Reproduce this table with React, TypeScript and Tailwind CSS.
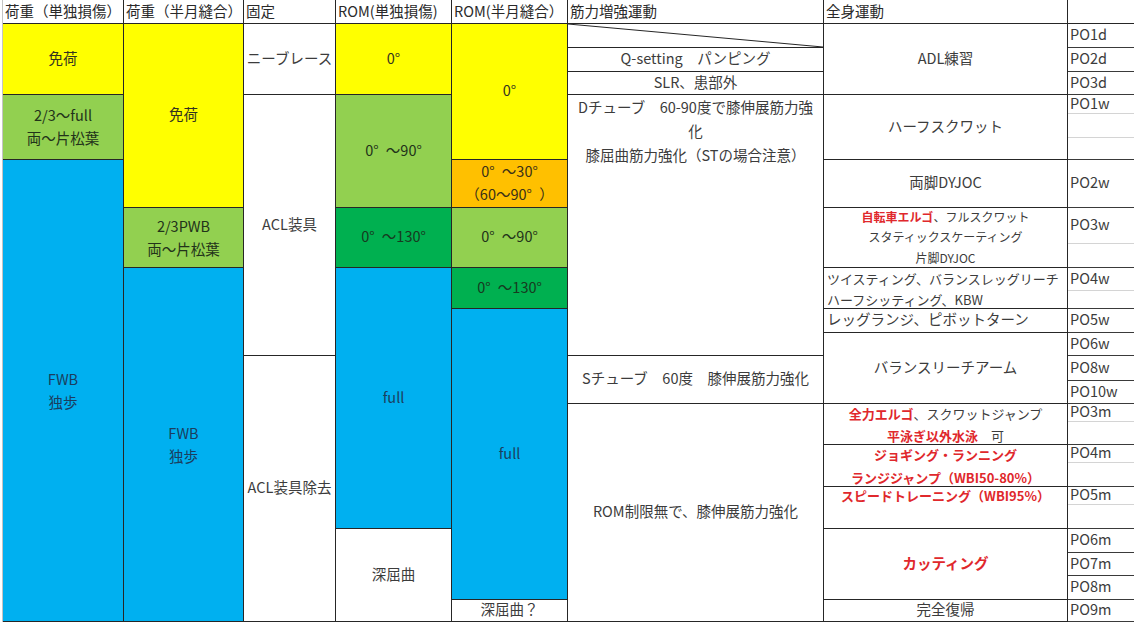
import React from 'react';

// 膝靭帯損傷のリハビリ進行表（Excel風）

const base = 'flex items-center justify-center text-center border-r border-b border-[#262626] whitespace-nowrap pb-[4px]';
const yellow = 'bg-[#ffff00] text-[#333320]';
const lime = 'bg-[#92d050] text-[#22331a]';
const green = 'bg-[#00b050] text-[#173a20]';
const orange = 'bg-[#ffc000] text-[#3a3018]';
const blue = 'bg-[#00b0f0] text-[#1b3e5e]';
const white = 'bg-white text-[#3c3c3c]';

function Cell({ className, children }: { className: string; children?: React.ReactNode }) {
  return <div className={`${base} ${className}`}>{children}</div>;
}

function Head({ className, children }: { className: string; children?: React.ReactNode }) {
  return (
    <div className={`flex items-center pl-[2px] pb-[2px] border-r border-b border-[#262626] bg-white text-[#2a2a2a] text-[14.5px] whitespace-nowrap ${className}`}>
      {children}
    </div>
  );
}

function Red({ children }: { children: React.ReactNode }) {
  return <span className="font-bold text-[#e0282c]">{children}</span>;
}

function Po({ row, light, children }: { row: string; light?: boolean; children?: React.ReactNode }) {
  return (
    <div
      className={`col-start-8 ${row} flex items-center pl-[2px] pb-[4px] border-r border-b bg-white text-[#3c3c3c] text-[14.5px] whitespace-nowrap ${
        light ? 'border-[#d4d4d4]' : 'border-[#3a3a3a]'
      }`}
    >
      {children}
    </div>
  );
}

export default function App() {
  return (
    <div className="w-[1134px] h-[623px] overflow-hidden bg-white font-['Noto_Sans_CJK_JP','Liberation_Sans',sans-serif]">
      <div className="ml-[2px] border-l border-[#c4c4c4] grid grid-cols-[121px_120px_92px_116px_116px_256px_244px_80px] grid-rows-[24px_24px_24px_23px_19px_24px_22px_48px_36px_24px_23px_18px_24px_23px_25px_23px_18px_23px_18px_24px_18px_24px_24px_23px_24px_22px] text-[14.5px] leading-[23px]">
        {/* header */}
        <Head className="col-start-1 row-start-1">荷重（単独損傷）</Head>
        <Head className="col-start-2 row-start-1">荷重（半月縫合）</Head>
        <Head className="col-start-3 row-start-1">固定</Head>
        <Head className="col-start-4 row-start-1">ROM(単独損傷)</Head>
        <Head className="col-start-5 row-start-1">ROM(半月縫合）</Head>
        <Head className="col-start-6 row-start-1">筋力増強運動</Head>
        <Head className="col-start-7 row-start-1">全身運動</Head>
        <Head className="col-start-8 row-start-1"></Head>

        {/* 荷重（単独損傷） */}
        <Cell className={`col-start-1 row-start-2 row-end-5 ${yellow}`}>免荷</Cell>
        <Cell className={`col-start-1 row-start-5 row-end-8 !pb-[2px] ${lime}`}>
          <div>2/3～full<br />両～片松葉</div>
        </Cell>
        <Cell className={`col-start-1 row-start-8 row-end-27 !pb-[2px] ${blue}`}>
          <div>FWB<br />独歩</div>
        </Cell>

        {/* 荷重（半月縫合） */}
        <Cell className={`col-start-2 row-start-2 row-end-9 ${yellow}`}>免荷</Cell>
        <Cell className={`col-start-2 row-start-9 row-end-11 !pb-[2px] ${lime}`}>
          <div>2/3PWB<br />両～片松葉</div>
        </Cell>
        <Cell className={`col-start-2 row-start-11 row-end-27 !pb-[2px] ${blue}`}>
          <div>FWB<br />独歩</div>
        </Cell>

        {/* 固定 */}
        <Cell className={`col-start-3 row-start-2 row-end-5 ${white}`}>ニーブレース</Cell>
        <Cell className={`col-start-3 row-start-5 row-end-15 ${white}`}>ACL装具</Cell>
        <Cell className={`col-start-3 row-start-15 row-end-27 ${white}`}>ACL装具除去</Cell>

        {/* ROM（単独損傷） */}
        <Cell className={`col-start-4 row-start-2 row-end-5 ${yellow}`}>0°</Cell>
        <Cell className={`col-start-4 row-start-5 row-end-9 ${lime}`}>0°{'\u2002'}～90°</Cell>
        <Cell className={`col-start-4 row-start-9 row-end-11 ${green}`}>0°{'\u2002'}～130°</Cell>
        <Cell className={`col-start-4 row-start-11 row-end-23 ${blue}`}>full</Cell>
        <Cell className={`col-start-4 row-start-23 row-end-27 ${white}`}>深屈曲</Cell>

        {/* ROM（半月縫合） */}
        <Cell className={`col-start-5 row-start-2 row-end-8 ${yellow}`}>0°</Cell>
        <Cell className={`col-start-5 row-start-8 row-end-9 !pb-[3px] ${orange}`}>
          <div>0°{'\u2002'}～30°<br />（60～90°{'\u2002'}）</div>
        </Cell>
        <Cell className={`col-start-5 row-start-9 row-end-11 ${lime}`}>0°{'\u2002'}～90°</Cell>
        <Cell className={`col-start-5 row-start-11 row-end-13 ${green}`}>0°{'\u2002'}～130°</Cell>
        <Cell className={`col-start-5 row-start-13 row-end-26 ${blue}`}>full</Cell>
        <Cell className={`col-start-5 row-start-26 row-end-27 ${white}`}>深屈曲？</Cell>

        {/* 筋力増強運動 */}
        <div className="col-start-6 row-start-2 row-end-3 relative border-r border-b border-[#262626] bg-white">
          <svg className="absolute inset-0 w-full h-full" viewBox="0 0 100 100" preserveAspectRatio="none">
            <line x1="0" y1="0" x2="100" y2="100" stroke="#262626" strokeWidth="1" vectorEffect="non-scaling-stroke" />
          </svg>
        </div>
        <Cell className={`col-start-6 row-start-3 row-end-4 ${white}`}>Q-setting　パンピング</Cell>
        <Cell className={`col-start-6 row-start-4 row-end-5 ${white}`}>SLR、患部外</Cell>
        <Cell className={`col-start-6 row-start-5 row-end-15 !items-start leading-[24px] ${white}`}>
          <div>
            Dチューブ　60-90度で膝伸展筋力強
            <br />化
            <br />膝屈曲筋力強化（STの場合注意）
          </div>
        </Cell>
        <Cell className={`col-start-6 row-start-15 row-end-17 ${white}`}>Sチューブ　60度　膝伸展筋力強化</Cell>
        <Cell className={`col-start-6 row-start-17 row-end-27 ${white}`}>ROM制限無で、膝伸展筋力強化</Cell>

        {/* 全身運動 */}
        <Cell className={`col-start-7 row-start-2 row-end-5 ${white}`}>ADL練習</Cell>
        <Cell className={`col-start-7 row-start-5 row-end-8 ${white}`}>ハーフスクワット</Cell>
        <Cell className={`col-start-7 row-start-8 row-end-9 ${white}`}>両脚DYJOC</Cell>
        <Cell className={`col-start-7 row-start-9 row-end-11 !pb-0 text-[12px] leading-[20.5px] ${white}`}>
          <div>
            <Red>自転車エルゴ</Red>、フルスクワット
            <br />スタティックスケーティング
            <br />片脚DYJOC
          </div>
        </Cell>
        <Cell className={`col-start-7 row-start-11 row-end-13 !justify-start !text-left pl-[3px] !pb-0 pt-[2px] text-[13px] leading-[21px] ${white}`}>
          <div>
            ツイスティング、バランスレッグリーチ
            <br />ハーフシッティング、KBW
          </div>
        </Cell>
        <Cell className={`col-start-7 row-start-13 row-end-14 !justify-start pl-[3px] ${white}`}>レッグランジ、ピボットターン</Cell>
        <Cell className={`col-start-7 row-start-14 row-end-17 ${white}`}>バランスリーチアーム</Cell>
        <Cell className={`col-start-7 row-start-17 row-end-19 !pb-0 pt-[2px] text-[13px] leading-[22px] ${white}`}>
          <div>
            <Red>全力エルゴ</Red>、スクワットジャンプ
            <br />
            <Red>平泳ぎ以外水泳</Red>　可
          </div>
        </Cell>
        <Cell className={`col-start-7 row-start-19 row-end-21 !pb-0 text-[13px] leading-[23px] ${white}`}>
          <div>
            <Red>ジョギング・ランニング</Red>
            <br />
            <Red>ランジジャンプ（WBI50-80%）</Red>
          </div>
        </Cell>
        <Cell className={`col-start-7 row-start-21 row-end-23 !items-start text-[13px] leading-[18px] ${white}`}>
          <Red>スピードトレーニング（WBI95%）</Red>
        </Cell>
        <Cell className={`col-start-7 row-start-23 row-end-26 ${white}`}>
          <Red>カッティング</Red>
        </Cell>
        <Cell className={`col-start-7 row-start-26 row-end-27 ${white}`}>完全復帰</Cell>

        {/* PO */}
        <Po row="row-start-2">PO1d</Po>
        <Po row="row-start-3">PO2d</Po>
        <Po row="row-start-4">PO3d</Po>
        <Po row="row-start-5" light>PO1w</Po>
        <Po row="row-start-6" light></Po>
        <Po row="row-start-7"></Po>
        <Po row="row-start-8">PO2w</Po>
        <Po row="row-start-9" light>PO3w</Po>
        <Po row="row-start-10"></Po>
        <Po row="row-start-11" light>PO4w</Po>
        <Po row="row-start-12"></Po>
        <Po row="row-start-13">PO5w</Po>
        <Po row="row-start-14">PO6w</Po>
        <Po row="row-start-15">PO8w</Po>
        <Po row="row-start-16">PO10w</Po>
        <Po row="row-start-17" light>PO3m</Po>
        <Po row="row-start-18"></Po>
        <Po row="row-start-19" light>PO4m</Po>
        <Po row="row-start-20"></Po>
        <Po row="row-start-21" light>PO5m</Po>
        <Po row="row-start-22"></Po>
        <Po row="row-start-23">PO6m</Po>
        <Po row="row-start-24">PO7m</Po>
        <Po row="row-start-25">PO8m</Po>
        <Po row="row-start-26">PO9m</Po>
      </div>
    </div>
  );
}
